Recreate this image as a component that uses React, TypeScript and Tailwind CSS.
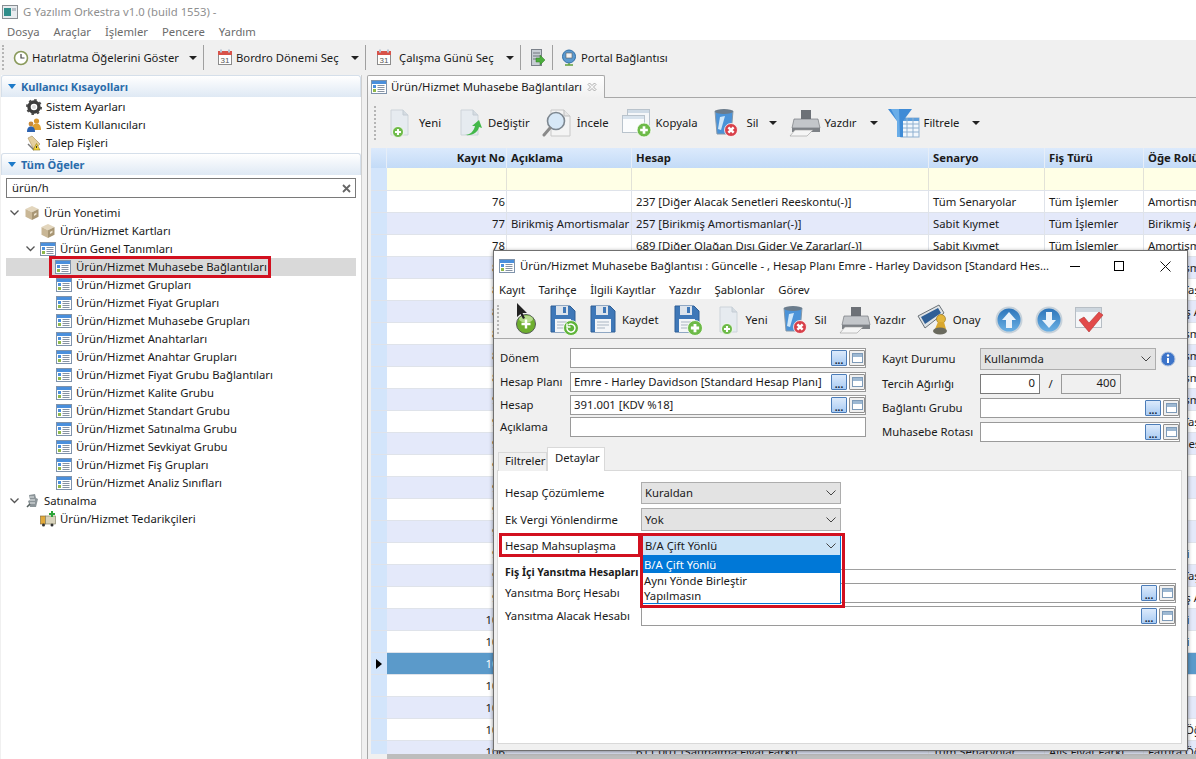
import type { ReactNode } from "react";

// ---- icons ----
type IconProps = { s?: number };

function ListIcon({ s = 16 }: IconProps) {
  return (
    <svg width={s} height={s} viewBox="0 0 16 16" className="shrink-0">
      <rect x="0.5" y="1.5" width="15" height="13" fill="#fff" stroke="#7f93ab" />
      <rect x="1" y="2" width="14" height="3" fill="#4a8fdc" />
      <rect x="2" y="6" width="3" height="3" fill="#4a8fdc" />
      <rect x="2" y="10" width="3" height="3" fill="#8fb84a" />
      <path d="M6.5 6.5h7M6.5 8.5h7M6.5 10.5h7M6.5 12.5h7" stroke="#8793a3" />
    </svg>
  );
}

function BoxIcon({ s = 16 }: IconProps) {
  return (
    <svg width={s} height={s} viewBox="0 0 16 16" className="shrink-0">
      <path d="M8 1l6.5 3L8 7.2 1.5 4z" fill="#e3d6bd" />
      <path d="M1.5 4L8 7.2V15l-6.500-3.200z" fill="#c9b796" />
      <path d="M14.5 4L8 7.2V15l6.500-3.200z" fill="#a89674" />
      <path d="M10 9l2.500-1.400v2L10 11z" fill="#eee4d0" />
    </svg>
  );
}

function CalendarIcon() {
  return (
    <svg width="16" height="17" viewBox="0 0 16 17" className="shrink-0">
      <rect x="1.5" y="2.5" width="13" height="13" fill="#fff" stroke="#8c8c8c" />
      <rect x="1" y="2" width="14" height="4" fill="#d8534a" />
      <rect x="3" y="0.5" width="2" height="3" fill="#b9c6d4" />
      <rect x="11" y="0.5" width="2" height="3" fill="#b9c6d4" />
      <text x="8" y="14" textAnchor="middle" fontSize="8" fontFamily="Liberation Sans" fill="#555">31</text>
    </svg>
  );
}

function ClockIcon() {
  return (
    <svg width="16" height="16" viewBox="0 0 16 16" className="shrink-0">
      <circle cx="8" cy="8" r="6.500" fill="#fff" stroke="#8a9a5b" strokeWidth="1.600" />
      <path d="M8 4v4h3.500" stroke="#444" strokeWidth="1.200" fill="none" />
    </svg>
  );
}

function GearIcon() {
  return (
    <svg width="16" height="16" viewBox="0 0 16 16" className="shrink-0">
      <circle cx="8" cy="8" r="5" fill="none" stroke="#3d3d3d" strokeWidth="3.400" />
      <circle cx="8" cy="8" r="7" fill="none" stroke="#4a4a4a" strokeWidth="2" strokeDasharray="2.500 3" />
      <circle cx="8" cy="8" r="2" fill="#ddd" />
    </svg>
  );
}

function UsersIcon() {
  return (
    <svg width="16" height="16" viewBox="0 0 16 16" className="shrink-0">
      <circle cx="10.500" cy="4" r="2.600" fill="#d9962c" />
      <path d="M6 13c0-5 2-6.500 4.500-6.500S15 8 15 13z" fill="#e0a030" />
      <circle cx="5" cy="7" r="2.400" fill="#c98a3a" />
      <path d="M1 15c0-4 1.500-5.500 4-5.500S9 11 9 15z" fill="#2c62b0" />
    </svg>
  );
}

function CartIcon() {
  return (
    <svg width="16" height="16" viewBox="0 0 16 16" className="shrink-0">
      <path d="M2 3l4-2 8 8-6 6z" fill="#e4cf9f" stroke="#a88d58" strokeWidth="0.600" />
      <path d="M2 9l6 6" stroke="#777" strokeWidth="1.400" />
      <path d="M10.500 8.500l3.500 6.500H7z" fill="#f4d43c" stroke="#8f7a16" strokeWidth="0.600" />
      <path d="M10.500 11v2" stroke="#333" />
    </svg>
  );
}

function MachineIcon() {
  return (
    <svg width="16" height="16" viewBox="0 0 16 16" className="shrink-0">
      <path d="M5 2l6-1 1 4 2 1-2 8H6L4 8l2-1z" fill="#8c9599" />
      <path d="M6 4h4M6 7h5M6 10h5" stroke="#e6e9ea" />
      <path d="M3 14l3-3" stroke="#55605f" strokeWidth="1.600" />
    </svg>
  );
}

function TruckIcon() {
  return (
    <svg width="16" height="16" viewBox="0 0 16 16" className="shrink-0">
      <rect x="0.500" y="5" width="5" height="8" fill="#e1a93a" stroke="#7b6230" strokeWidth="0.600" />
      <rect x="5.500" y="5" width="10" height="8" fill="#d8d3bd" stroke="#7b7558" strokeWidth="0.600" />
      <circle cx="3.500" cy="14" r="1.500" fill="#333" />
      <circle cx="12" cy="14" r="1.500" fill="#333" />
      <path d="M12 0v6M9 3h6" stroke="#2ea53a" strokeWidth="2" />
    </svg>
  );
}

function PrintExportIcon() {
  return (
    <svg width="16" height="20" viewBox="0 0 16 20" className="shrink-0">
      <rect x="1.500" y="1.500" width="10" height="16" fill="#c7ccd4" stroke="#7b818a" />
      <path d="M3 5h7M3 8h7M3 11h4" stroke="#70767f" />
      <path d="M6 10h4V7l5 5-5 5v-3H6z" fill="#4cae3d" stroke="#2f7a25" strokeWidth="0.500" />
    </svg>
  );
}

function GlobeIcon() {
  return (
    <svg width="16" height="17" viewBox="0 0 16 17" className="shrink-0">
      <circle cx="8" cy="7.500" r="6.500" fill="#5b9ad0" stroke="#2f6ea6" />
      <rect x="5" y="4" width="6" height="5" fill="#f2f2f2" stroke="#5a5a5a" strokeWidth="0.600" />
      <path d="M8 14v2M4 16h8" stroke="#5f9e3c" strokeWidth="1.300" />
    </svg>
  );
}

function Badge({ kind, x, y, r = 6 }: { kind: "plus" | "x"; x: number; y: number; r?: number }) {
  const fill = kind === "plus" ? "#6dba48" : "#d8404a";
  const d = kind === "plus"
    ? `M${x - r * 0.55} ${y}h${r * 1.1}M${x} ${y - r * 0.55}v${r * 1.1}`
    : `M${x - r * 0.4} ${y - r * 0.4}l${r * 0.8} ${r * 0.8}M${x + r * 0.4} ${y - r * 0.4}l${-r * 0.8} ${r * 0.8}`;
  return (
    <>
      <circle cx={x} cy={y} r={r} fill={fill} stroke="#fff" strokeWidth="0.800" />
      <path d={d} stroke="#fff" strokeWidth={r * 0.38} />
    </>
  );
}

function DocIcon({ arrow }: { arrow?: boolean }) {
  return (
    <svg width="26" height="30" viewBox="0 0 26 30" className="shrink-0">
      <path d="M3 2h12l5 5v20H3z" fill="#e6ebf0" stroke="#cdd4da" />
      <path d="M15 2v5h5" fill="#d5dce2" stroke="#c4ccd4" />
      {arrow ? <path d="M7 27c5 0 9-4 10-9l-3 0 7-6 3 8-3-1c-1 5-6 9-14 8z" fill="#43b84a" /> : <Badge kind="plus" x={10} y={24} r={5.500} />}
    </svg>
  );
}

function LensIcon() {
  return (
    <svg width="30" height="32" viewBox="0 0 30 32" className="shrink-0">
      <path d="M9 3h13l6 6v20H9z" fill="#f4f4f4" stroke="#c8c8c8" />
      <path d="M22 3v6h6" fill="#e6e6e6" stroke="#bdbdbd" />
      <circle cx="14" cy="14" r="8.500" fill="#d7e8f7" stroke="#7d8790" strokeWidth="1.600" />
      <path d="M8 21L2 28" stroke="#8a8a8a" strokeWidth="3" strokeLinecap="round" />
    </svg>
  );
}

function CopyIcon() {
  return (
    <svg width="31" height="30" viewBox="0 0 31 30" className="shrink-0">
      <rect x="6.500" y="1.500" width="22" height="16" fill="#f5f7f9" stroke="#b9c3cc" />
      <rect x="7" y="2" width="21" height="3" fill="#cfdbe6" />
      <rect x="1.500" y="7.500" width="22" height="17" fill="#fbfcfd" stroke="#b9c3cc" />
      <rect x="2" y="8" width="21" height="3" fill="#d8e3ed" />
      <Badge kind="plus" x={23} y={22} r={7} />
    </svg>
  );
}

function TrashIcon() {
  return (
    <svg width="26" height="30" viewBox="0 0 26 30" className="shrink-0">
      <path d="M2 3h18l-2 23H4z" fill="#4b93d8" stroke="#8698a8" />
      <ellipse cx="11" cy="3.500" rx="9" ry="2.500" fill="#6b7c8c" />
      <path d="M7 9l5-1-4 14-3-1z" fill="#cfe7f9" />
      <Badge kind="x" x={18} y={22} r={6.500} />
    </svg>
  );
}

function PrinterIcon() {
  return (
    <svg width="32" height="28" viewBox="0 0 32 28" className="shrink-0">
      <path d="M12 1h10v10H12z" fill="#6d7177" />
      <path d="M5 10h24l2 9H3z" fill="#c3c6ca" stroke="#66696e" strokeWidth="0.600" />
      <path d="M3 19h28v4H3z" fill="#7d8186" />
      <path d="M6 21h18l-6 6H1z" fill="#f5f5f5" stroke="#9a9a9a" strokeWidth="0.600" />
    </svg>
  );
}

function FunnelIcon() {
  return (
    <svg width="32" height="30" viewBox="0 0 32 30" className="shrink-0">
      <rect x="13" y="10" width="18" height="19" fill="#f2f7fc" stroke="#8fb0d0" />
      <path d="M13 10h18v3H13z" fill="#5f9fdb" />
      <path d="M13 16h18M13 20h18M13 24h18M19 10v19M25 10v19" stroke="#8fb0d0" />
      <path d="M0 1h24l-9 12v16H9V13z" fill="#3f8bd6" />
      <path d="M3 1h8l1 28H9V13z" fill="#7dbcf0" opacity="0.700" />
    </svg>
  );
}

function GreenAddIcon() {
  return (
    <svg width="20" height="28" viewBox="0 0 20 28" className="shrink-0">
      <circle cx="10" cy="18" r="9.500" fill="#6eaf2f" stroke="#55595a" />
      <ellipse cx="10" cy="13" rx="7" ry="3.500" fill="#b5dc8b" />
      <path d="M5.500 18h9M10 13.500v9" stroke="#fff" strokeWidth="2.400" />
    </svg>
  );
}

function SaveIcon({ badge }: { badge?: "plus" | "undo" }) {
  return (
    <svg width="30" height="32" viewBox="0 0 30 32" className="shrink-0">
      <path d="M1 2h19l5 5v21H1z" fill="#3f78b8" stroke="#2f5f96" />
      <rect x="6" y="2" width="12" height="9" fill="#dde4ec" />
      <rect x="13" y="3" width="3" height="6" fill="#3f78b8" />
      <rect x="5" y="15" width="16" height="13" fill="#f4f6f8" />
      <path d="M7 18h12M7 21h12M7 24h8" stroke="#a9b5c2" />
      {badge === "plus" && <Badge kind="plus" x={21} y={24} r={7.500} />}
      {badge === "undo" && (
        <>
          <circle cx="21" cy="24" r="7.500" fill="#5fb43a" stroke="#fff" strokeWidth="0.800" />
          <path d="M17 24a4 4 0 1 0 1.500-3M17 19.500V23h3.500" stroke="#fff" strokeWidth="1.500" fill="none" />
        </>
      )}
    </svg>
  );
}

function StampIcon() {
  return (
    <svg width="32" height="32" viewBox="0 0 32 32" className="shrink-0">
      <path d="M1 12L22 1l5 8L8 24z" fill="#dfe3e6" stroke="#6a7176" />
      <path d="M4 13L21 4l3 5L8 20z" fill="#2f5f96" />
      <circle cx="24" cy="15" r="4.500" fill="#e3b53a" stroke="#8a6c1a" strokeWidth="0.600" />
      <path d="M21 18h6l2 7H18z" fill="#d9a72e" />
      <ellipse cx="23" cy="27" rx="7" ry="3.500" fill="#6a6a5e" />
    </svg>
  );
}

function ArrowCircle({ down }: { down?: boolean }) {
  const id = down ? "orbDown" : "orbUp";
  return (
    <svg width="28" height="28" viewBox="0 0 28 28" className="shrink-0">
      <defs>
        <linearGradient id={id} x1="0" y1="0" x2="0" y2="1">
          <stop offset="0" stopColor="#2a72b8" />
          <stop offset="1" stopColor="#6db3e6" />
        </linearGradient>
      </defs>
      <circle cx="14" cy="14" r="12.500" fill={`url(#${id})`} stroke="#c6d1da" strokeWidth="2" />
      <path d="M14 6l7 8h-4v8h-6v-8H7z" fill="#e9f2fa" transform={down ? "rotate(180 14 14)" : undefined} />
    </svg>
  );
}

function CheckDocIcon() {
  return (
    <svg width="30" height="30" viewBox="0 0 30 30" className="shrink-0">
      <rect x="1.500" y="2.500" width="26" height="20" fill="#f4f6f8" stroke="#b7bec5" />
      <rect x="2" y="3" width="25" height="4" fill="#cdd6de" />
      <path d="M5 15l5-3 5 6L25 7l4 3-14 17z" fill="#e24a4a" stroke="#b23030" strokeWidth="0.600" />
    </svg>
  );
}

function Chevron() {
  return (
    <svg width="10" height="6" viewBox="0 0 10 6" className="shrink-0">
      <path d="M0.500 0.500L5 5l4.500-4.500" fill="none" stroke="#444" />
    </svg>
  );
}

function TreeChevron() {
  return (
    <svg width="9" height="6" viewBox="0 0 9 6" className="shrink-0">
      <path d="M0.500 0.500L4.500 4.500l4-4" fill="none" stroke="#555" strokeWidth="1.300" />
    </svg>
  );
}

function TabClose() {
  return (
    <svg width="10" height="10" viewBox="0 0 10 10" className="shrink-0">
      <path d="M1 2.500L2.500 1 5 3.500 7.500 1 9 2.500 6.500 5 9 7.500 7.500 9 5 6.500 2.500 9 1 7.500 3.500 5z" fill="none" stroke="#9a9a9a" strokeWidth="0.800" />
    </svg>
  );
}

function Caret() {
  return <span className="block w-0 h-0 shrink-0 border-x-[4px] border-x-transparent border-t-[4px] border-t-[#222]" />;
}

function Grip() {
  return <div className="w-[2px] shrink-0 self-stretch border-l-2 border-dotted border-[#b5b5b5]" />;
}

function BrowseButtons() {
  return (
    <div className="flex items-center gap-[2px] shrink-0">
      <div className="w-[16px] h-[16px] rounded-[1px] border border-[#4b7cb8] bg-gradient-to-b from-[#dceafb] to-[#a9cbf3] flex items-end justify-center text-[#123] text-[10px] leading-[10px] font-bold">...</div>
      <div className="w-[16px] h-[16px] rounded-[1px] border border-[#8f8f8f] bg-[#f0f0f0] flex items-center justify-center">
        <div className="w-[11px] h-[10px] border border-[#7d9ab8] bg-white">
          <div className="h-[3px] bg-[#9db8d2]" />
        </div>
      </div>
    </div>
  );
}

// ---- form parts ----
function Lookup({ value, className }: { value?: string; className: string }) {
  return (
    <div className={`flex items-center bg-white border border-[#9a9a9a] h-[20px] pl-[3px] ${className}`}>
      <span className="flex-1 truncate">{value}</span>
      <BrowseButtons />
    </div>
  );
}

function Combo({ value, className }: { value: string; className: string }) {
  return (
    <div className={`flex items-center justify-between border border-[#adadad] bg-[#e3e3e3] px-[3px] pr-[4px] ${className}`}>
      <span>{value}</span>
      <Chevron />
    </div>
  );
}

// ---- grid data ----
type Row = { no: number; desc?: string; acc?: string; sc?: string; fis?: string; role?: string };

const rows: Row[] = [
  { no: 76, acc: "237 [Diğer Alacak Senetleri Reeskontu(-)]", sc: "Tüm Senaryolar", fis: "Tüm İşlemler", role: "Amortisman" },
  { no: 77, desc: "Birikmiş Amortismalar", acc: "257 [Birikmiş Amortismanlar(-)]", sc: "Sabit Kıymet", fis: "Tüm İşlemler", role: "Birikmiş Amortisman" },
  { no: 78, acc: "689 [Diğer Olağan Dışı Gider Ve Zararlar(-)]", sc: "Sabit Kıymet", fis: "Tüm İşlemler", role: "Amortisman" },
];
const hiddenRoles = ["Amortisman", "Kargo Taşıma", "Birikmiş Amortisman", "Amortisman", "Amortisman", "Amortisman", "Amortisman", "Kargo Taşıma", "Gider Hesabı", "", "", "", "", "Maliyeti", "Kargo Taşıma", "Birikmiş Amortisman", "Maliyeti", "Maliyeti", "", "", "", "Fatura Öğe"];
hiddenRoles.forEach((role, i) => {
  const idx = i + 3;
  rows.push({ no: 81 + idx, role });
});
rows.push({ no: 106, acc: "611.001 [Satınalma Fiyat Farkı]", sc: "Tüm Senaryolar", fis: "Alış Fiyat Farkı", role: "Fatura Öğe" });

const treeChildren = [
  "Ürün/Hizmet Grupları",
  "Ürün/Hizmet Fiyat Grupları",
  "Ürün/Hizmet Muhasebe Grupları",
  "Ürün/Hizmet Anahtarları",
  "Ürün/Hizmet Anahtar Grupları",
  "Ürün/Hizmet Fiyat Grubu Bağlantıları",
  "Ürün/Hizmet Kalite Grubu",
  "Ürün/Hizmet Standart Grubu",
  "Ürün/Hizmet Satınalma Grubu",
  "Ürün/Hizmet Sevkiyat Grubu",
  "Ürün/Hizmet Fiş Grupları",
  "Ürün/Hizmet Analiz Sınıfları",
];

function SectionHeader({ title }: { title: string }) {
  return (
    <div className="h-[22px] flex items-center gap-[5px] pl-[6px] rounded-t-[3px] border border-b-0 border-[#d5dfea] bg-gradient-to-b from-white to-[#dfe9f4]">
      <span className="block w-0 h-0 border-x-[4px] border-x-transparent border-t-[5px] border-t-[#1c7ac9]" />
      <span className="font-bold text-[11px] text-[#2a6cab]">{title}</span>
    </div>
  );
}

function TreeRow({ pad, icon, label, chevron }: { pad: string; icon: ReactNode; label: string; chevron?: boolean }) {
  return (
    <div className={`h-[18px] flex items-center ${pad}`}>
      {chevron && <span className="w-[16px] pl-[2px] flex items-center"><TreeChevron /></span>}
      {icon}
      <span className="ml-[4px] whitespace-nowrap">{label}</span>
    </div>
  );
}

function ToolLabel({ children, className }: { children: ReactNode; className: string }) {
  return <span className={`whitespace-nowrap ${className}`}>{children}</span>;
}

export default function App() {
  return (
    <div className="relative w-[1196px] h-[759px] overflow-hidden bg-[#f0f0f0] text-[#1a1a1a] text-[11.3px] leading-[16px] [font-family:'Noto_Sans',sans-serif]">
      {/* title + menu */}
      <div className="h-[24px] bg-white flex items-center pl-[2px] gap-[5px] text-[#8f8f8f]">
        <svg width="16" height="14" viewBox="0 0 16 14" className="shrink-0">
          <rect x="0.500" y="0.500" width="15" height="13" fill="#e8ecef" stroke="#8a8f94" />
          <rect x="2" y="3" width="7" height="8" fill="#2f8d8a" />
          <rect x="10" y="3" width="4" height="3" fill="#b7c0c8" />
        </svg>
        <span>G Yazılım Orkestra v1.0 (build 1553) -</span>
      </div>
      <div className="h-[16px] bg-white flex items-center gap-[14px] pl-[7px] text-[#6b6b6b]">
        <span>Dosya</span><span>Araçlar</span><span>İşlemler</span><span>Pencere</span><span>Yardım</span>
      </div>

      {/* main toolbar */}
      <div className="h-[35px] flex items-center pl-[2px] py-[5px]">
        <Grip />
        <div className="ml-[9px]"><ClockIcon /></div>
        <span className="ml-[3px] whitespace-nowrap w-[144px]">Hatırlatma Öğelerini Göster</span>
        <div className="ml-[13px]"><Caret /></div>
        <div className="ml-[6px] w-px self-stretch bg-[#a0a0a0]" />
        <div className="ml-[13px]"><CalendarIcon /></div>
        <span className="ml-[3px] whitespace-nowrap w-[102px]">Bordro Dönemi Seç</span>
        <div className="ml-[13px]"><Caret /></div>
        <div className="ml-[6px] w-px self-stretch bg-[#a0a0a0]" />
        <div className="ml-[10px]"><CalendarIcon /></div>
        <span className="ml-[7px] whitespace-nowrap w-[94px]">Çalışma Günü Seç</span>
        <div className="ml-[13px]"><Caret /></div>
        <div className="ml-[6px] w-px self-stretch bg-[#a0a0a0]" />
        <div className="ml-[9px]"><PrintExportIcon /></div>
        <div className="ml-[6px] w-px self-stretch bg-[#a0a0a0]" />
        <div className="ml-[8px]"><GlobeIcon /></div>
        <span className="ml-[4px] whitespace-nowrap">Portal Bağlantısı</span>
      </div>

      <div className="flex h-[684px]">
        {/* left panel */}
        <aside className="w-[361px] shrink-0 flex flex-col bg-white ml-[1px] border-r border-[#d0d0d0]">
          <SectionHeader title="Kullanıcı Kısayolları" />
          <div className="pt-[1px] h-[56px] bg-white">
            <TreeRow pad="pl-[25px]" icon={<GearIcon />} label="Sistem Ayarları" />
            <TreeRow pad="pl-[25px]" icon={<UsersIcon />} label="Sistem Kullanıcıları" />
            <TreeRow pad="pl-[25px]" icon={<CartIcon />} label="Talep Fişleri" />
          </div>
          <SectionHeader title="Tüm Öğeler" />
          <div className="px-[5px] pt-[3px]">
            <div className="h-[20px] border border-[#7a7a7a] flex items-center justify-between pl-[5px] pr-[4px] bg-white">
              <span>ürün/h</span>
              <svg width="9" height="9" viewBox="0 0 9 9" className="shrink-0">
                <path d="M1 1l7 7M8 1L1 8" stroke="#666" strokeWidth="1.800" />
              </svg>
            </div>
          </div>
          <div className="pt-[6px] relative">
            <TreeRow chevron pad="pl-[7px]" icon={<BoxIcon />} label="Ürün Yonetimi" />
            <TreeRow pad="pl-[39px]" icon={<BoxIcon />} label="Ürün/Hizmet Kartları" />
            <TreeRow chevron pad="pl-[23px]" icon={<ListIcon />} label="Ürün Genel Tanımları" />
            <div className="mx-[5px] h-[18px] bg-[#d9d9d9] flex items-center pl-[49px] relative">
              <ListIcon />
              <span className="ml-[5px] whitespace-nowrap">Ürün/Hizmet Muhasebe Bağlantıları</span>
              <div className="absolute left-[43px] top-[-2px] w-[222px] h-[22px] border-[3px] border-[#d2101f]" />
            </div>
            {treeChildren.map((t) => (
              <TreeRow key={t} pad="pl-[55px]" icon={<ListIcon />} label={t} />
            ))}
            <TreeRow chevron pad="pl-[7px]" icon={<MachineIcon />} label="Satınalma" />
            <TreeRow pad="pl-[39px]" icon={<TruckIcon />} label="Ürün/Hizmet Tedarikçileri" />
          </div>
        </aside>

        {/* right panel */}
        <main className="flex-1 min-w-0 ml-[5px] flex flex-col">
          <div className="h-[23px] flex">
            <div className="w-[238px] h-[23px] border border-b-0 border-[#a8a8a8] rounded-t-[2px] flex items-center pl-[3px] bg-gradient-to-b from-white to-[#f0f0f0]">
              <ListIcon />
              <span className="ml-[4px] whitespace-nowrap w-[196px]">Ürün/Hizmet Muhasebe Bağlantıları</span>
              <TabClose />
            </div>
            <div className="flex-1 border-b border-[#a8a8a8]" />
          </div>
          <div className="flex-1 min-h-0 border-l border-[#a8a8a8] flex flex-col">
            <div className="h-[50px] flex items-center pl-[6px] py-[8px] shrink-0">
              <Grip />
              <div className="ml-[12px]"><DocIcon /></div>
              <ToolLabel className="ml-[5px]">Yeni</ToolLabel>
              <div className="ml-[17px]"><DocIcon arrow /></div>
              <ToolLabel className="ml-[4px]">Değiştir</ToolLabel>
              <div className="ml-[12px]"><LensIcon /></div>
              <ToolLabel className="ml-[5px]">İncele</ToolLabel>
              <div className="ml-[12px]"><CopyIcon /></div>
              <ToolLabel className="ml-[4px]">Kopyala</ToolLabel>
              <div className="ml-[16px]"><TrashIcon /></div>
              <ToolLabel className="ml-[7px]">Sil</ToolLabel>
              <div className="ml-[10px]"><Caret /></div>
              <div className="ml-[12px]"><PrinterIcon /></div>
              <ToolLabel className="ml-[4px]">Yazdır</ToolLabel>
              <div className="ml-[13px]"><Caret /></div>
              <div className="ml-[10px]"><FunnelIcon /></div>
              <ToolLabel className="ml-[4px]">Filtrele</ToolLabel>
              <div className="ml-[13px]"><Caret /></div>
            </div>

            {/* grid */}
            <div className="flex-1 min-h-0 ml-[3px] overflow-hidden bg-white">
              <div className="w-[900px] flex flex-col">
                <div className="flex h-[20px] bg-gradient-to-b from-[#dceafc] to-[#c3dbf7] font-bold items-center shrink-0">
                  <div className="w-[16px] self-stretch border-r border-[#e6eef8]" />
                  <div className="w-[120px] text-right pr-[1px] border-r border-[#e6eef8] leading-[20px] whitespace-nowrap">Kayıt No</div>
                  <div className="w-[125px] pl-[4px] border-r border-[#e6eef8] leading-[20px]">Açıklama</div>
                  <div className="w-[297px] pl-[4px] border-r border-[#e6eef8] leading-[20px]">Hesap</div>
                  <div className="w-[116px] pl-[4px] border-r border-[#e6eef8] leading-[20px]">Senaryo</div>
                  <div className="w-[99px] pl-[4px] border-r border-[#e6eef8] leading-[20px]">Fiş Türü</div>
                  <div className="w-[120px] pl-[4px] leading-[20px] whitespace-nowrap">Öğe Rolü</div>
                </div>
                <div className="flex h-[23px] bg-[#ffffe6] border-b border-[#dfe3ea]">
                  <div className="w-[16px] bg-[#d3e5fb]" />
                  <div className="w-[120px] border-r border-[#e2e2d8]" />
                  <div className="w-[125px] border-r border-[#e2e2d8]" />
                  <div className="w-[297px] border-r border-[#e2e2d8]" />
                  <div className="w-[116px] border-r border-[#e2e2d8]" />
                  <div className="w-[99px] border-r border-[#e2e2d8]" />
                </div>
                {rows.map((r, i) => {
                  const selected = i === 21;
                  const tone = selected ? "bg-[#5b9aca] text-white" : i % 2 === 1 ? "bg-[#e4e9fa]" : "bg-white";
                  return (
                    <div key={i} className={`flex h-[22px] leading-[21px] border-b border-[#dfe3ea] whitespace-nowrap ${tone}`}>
                      <div className="w-[16px] bg-[#d3e5fb] flex items-center justify-center">
                        {selected && <span className="block w-0 h-0 border-y-[5px] border-y-transparent border-l-[6px] border-l-black" />}
                      </div>
                      <div className="w-[120px] text-right pr-[1px] border-r border-[#dfe3ea]">{r.no}</div>
                      <div className="w-[125px] pl-[4px] border-r border-[#dfe3ea] overflow-hidden">{r.desc}</div>
                      <div className="w-[297px] pl-[4px] border-r border-[#dfe3ea] overflow-hidden">{r.acc}</div>
                      <div className="w-[116px] pl-[4px] border-r border-[#dfe3ea] overflow-hidden">{r.sc}</div>
                      <div className="w-[99px] pl-[4px] border-r border-[#dfe3ea] overflow-hidden">{r.fis}</div>
                      <div className="w-[120px] pl-[4px]">{r.role}</div>
                    </div>
                  );
                })}
              </div>
            </div>
            <div className="h-[5px] shrink-0 flex">
              <div className="w-[19px] bg-[#f0f0f0]" />
              <div className="flex-1 bg-[#bdbdbd]" />
            </div>
          </div>
        </main>
      </div>

      {/* dialog window */}
      <section className="absolute left-[493px] top-[250px] w-[695px] h-[501px] bg-[#f0f0f0] border border-[#707070] shadow-[0_1px_4px_rgba(0,0,0,0.45)] flex flex-col">
        <div className="h-[30px] bg-white flex items-center pl-[5px] shrink-0">
          <ListIcon />
          <span className="ml-[5px] whitespace-nowrap w-[533px] overflow-hidden">Ürün/Hizmet Muhasebe Bağlantısı : Güncelle - , Hesap Planı Emre - Harley Davidson [Standard Hes...</span>
          <span className="block ml-[17px] w-[10px] h-px bg-black" />
          <span className="block ml-[34px] w-[10px] h-[10px] border border-black" />
          <svg width="11" height="11" viewBox="0 0 11 11" className="ml-[36px]">
            <path d="M0.500 0.500l10 10M10.500 0.500l-10 10" stroke="#111" />
          </svg>
        </div>
        <div className="h-[18px] bg-white flex items-center gap-[13.5px] pl-[5px] shrink-0">
          <span>Kayıt</span><span>Tarihçe</span><span>İlgili Kayıtlar</span><span>Yazdır</span><span>Şablonlar</span><span>Görev</span>
        </div>
        <div className="h-[40px] flex items-center pl-[3px] pt-[6px] pb-[4px] border-b border-[#a8a8a8] shrink-0">
          <Grip />
          <div className="ml-[17px]"><GreenAddIcon /></div>
          <div className="ml-[14px]"><SaveIcon badge="undo" /></div>
          <div className="ml-[10px]"><SaveIcon /></div>
          <ToolLabel className="ml-[2px]">Kaydet</ToolLabel>
          <div className="ml-[15px]"><SaveIcon badge="plus" /></div>
          <div className="ml-[13px]"><DocIcon /></div>
          <ToolLabel className="ml-[3px]">Yeni</ToolLabel>
          <div className="ml-[14px]"><TrashIcon /></div>
          <ToolLabel className="ml-[7px]">Sil</ToolLabel>
          <div className="ml-[12px]"><PrinterIcon /></div>
          <ToolLabel className="ml-[3px]">Yazdır</ToolLabel>
          <div className="ml-[11px]"><StampIcon /></div>
          <ToolLabel className="ml-[4px]">Onay</ToolLabel>
          <div className="ml-[14px]"><ArrowCircle /></div>
          <div className="ml-[12px]"><ArrowCircle down /></div>
          <div className="ml-[11px]"><CheckDocIcon /></div>
        </div>

        <div className="flex pt-[9px] pl-[6px] shrink-0 h-[108px]">
          <div className="w-[366px] flex flex-col">
            <div className="flex items-center h-[20px]"><span className="w-[70px]">Dönem</span><Lookup className="w-[296px]" /></div>
            <div className="flex items-center h-[20px] mt-[4px]"><span className="w-[70px] whitespace-nowrap">Hesap Planı</span><Lookup className="w-[296px]" value="Emre - Harley Davidson [Standard Hesap Planı]" /></div>
            <div className="flex items-center h-[20px] mt-[3px]"><span className="w-[70px]">Hesap</span><Lookup className="w-[296px]" value="391.001 [KDV %18]" /></div>
            <div className="flex items-center h-[20px] mt-[2px]"><span className="w-[70px]">Açıklama</span><div className="w-[296px] h-[20px] bg-white border border-[#9a9a9a]" /></div>
          </div>
          <div className="ml-[16px] flex-1 flex flex-col gap-[4px]">
            <div className="flex items-center h-[22px]">
              <span className="w-[98px] whitespace-nowrap">Kayıt Durumu</span>
              <Combo value="Kullanımda" className="w-[176px] h-[22px]" />
              <svg width="16" height="16" viewBox="0 0 16 16" className="ml-[4px]">
                <circle cx="8" cy="8" r="7" fill="#3d74c9" stroke="#b6c5dc" />
                <circle cx="8" cy="4.500" r="1.200" fill="#fff" />
                <path d="M8 7v5" stroke="#fff" strokeWidth="2" />
              </svg>
            </div>
            <div className="flex items-center h-[20px]">
              <span className="w-[98px] whitespace-nowrap">Tercih Ağırlığı</span>
              <div className="w-[60px] h-[20px] bg-white border border-[#7a7a7a] text-right pr-[4px]">0</div>
              <span className="w-[21px] text-center">/</span>
              <div className="w-[60px] h-[20px] bg-[#f0f0f0] border border-[#9a9a9a] text-right pr-[4px]">400</div>
            </div>
            <div className="flex items-center h-[20px]">
              <span className="w-[98px] whitespace-nowrap">Bağlantı Grubu</span>
              <Lookup className="w-[200px]" />
            </div>
            <div className="flex items-center h-[20px]">
              <span className="w-[98px] whitespace-nowrap">Muhasebe Rotası</span>
              <Lookup className="w-[200px]" />
            </div>
          </div>
        </div>

        {/* tabs */}
        <div className="flex h-[24px] pl-[4px] shrink-0 items-end relative z-10 -mb-px">
          <div className="w-[49px] h-[19px] bg-[#f0f0f0] border border-b-0 border-[#d9d9d9] pl-[6px] leading-[16px]">Filtreler</div>
          <div className="w-[58px] h-[24px] bg-white border border-b-0 border-[#d9d9d9] pl-[7px] leading-[20px]">Detaylar</div>
        </div>
        <div className="mx-[3px] w-[685px] h-[274px] bg-white border border-[#d9d9d9] shrink-0 pt-[11px] pl-[7px] flex flex-col">
          <div className="flex items-center h-[22px]">
            <span className="w-[136px] whitespace-nowrap">Hesap Çözümleme</span>
            <Combo value="Kuraldan" className="w-[200px] h-[22px]" />
          </div>
          <div className="flex items-center h-[23px] mt-[4px]">
            <span className="w-[136px] whitespace-nowrap">Ek Vergi Yönlendirme</span>
            <Combo value="Yok" className="w-[200px] h-[23px]" />
          </div>
          <div className="flex items-center h-[21px] mt-[4px] relative">
            <span className="w-[136px] whitespace-nowrap">Hesap Mahsuplaşma</span>
            <div className="w-[200px] h-[21px] flex items-center justify-between bg-[#cce4f7] border border-[#0078d7] pl-[3px] pr-[4px]">
              <span>B/A Çift Yönlü</span>
              <Chevron />
            </div>
            {/* open list */}
            <div className="absolute left-[136px] top-[21px] w-[200px] h-[48px] z-20 bg-white border border-[#0078d7] border-t-0 leading-[15px]">
              <div className="h-[17px] bg-[#0078d7] text-white pl-[2px] pt-[1px]">B/A Çift Yönlü</div>
              <div className="h-[15px] pl-[2px]">Aynı Yönde Birleştir</div>
              <div className="h-[15px] pl-[2px]">Yapılmasın</div>
            </div>
            {/* red marks */}
            <div className="absolute left-[-6px] top-[-2px] w-[142px] h-[24px] z-30 border-[3px] border-[#d2101f]" />
            <div className="absolute left-[135px] top-[-2px] w-[205px] h-[75px] z-30 border-[3px] border-[#d2101f]" />
          </div>
          <div className="flex items-center h-[16px] mt-[8px] relative">
            <span className="font-bold text-[10.5px] whitespace-nowrap w-[136px] overflow-hidden">Fiş İçi Yansıtma Hesapları</span>
            <div className="w-[535px] h-px bg-[#a0a0a0] -mt-[6px]" />
          </div>
          <div className="flex items-center h-[20px] mt-[3px]">
            <span className="w-[136px] whitespace-nowrap">Yansıtma Borç Hesabı</span>
            <Lookup className="w-[535px]" />
          </div>
          <div className="flex items-center h-[20px] mt-[3px]">
            <span className="w-[136px] whitespace-nowrap">Yansıtma Alacak Hesabı</span>
            <Lookup className="w-[535px]" />
          </div>
        </div>
      </section>

      {/* mouse pointer */}
      <svg width="12" height="18" viewBox="0 0 12 18" className="absolute left-[516px] top-[303px]">
        <path d="M1 0v14l3.500-3 2.500 5 2-1-2.500-5H11z" fill="#222" />
      </svg>
    </div>
  );
}
